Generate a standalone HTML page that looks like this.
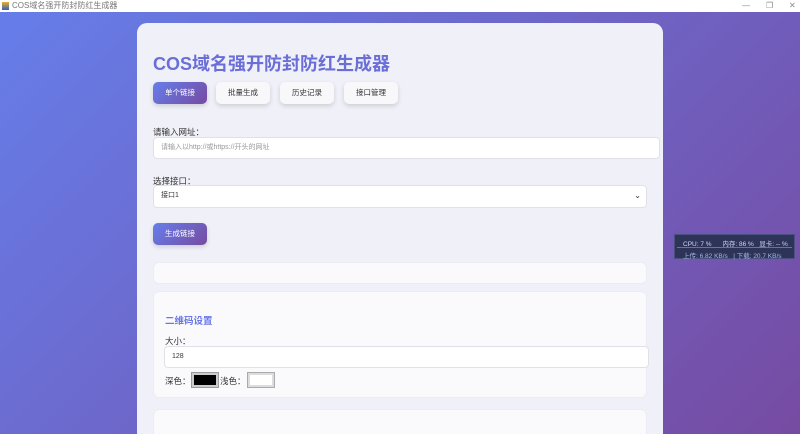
<!DOCTYPE html>
<html><head><meta charset="utf-8"><style>
*{box-sizing:border-box;margin:0;padding:0}
html{width:800px;height:434px;overflow:hidden}
body{width:800px;height:434px;overflow:hidden;font-family:"Liberation Sans","Noto Sans CJK SC",sans-serif;background:linear-gradient(135deg,#667eea 0%,#764ba2 100%);position:relative}
.tb{position:absolute;left:0;top:0;width:800px;height:12px;background:#fff;font-size:8px;color:#777;line-height:12px;padding-left:12px}
.tb i{position:absolute;left:2px;top:2px;width:7px;height:8px;background:linear-gradient(#e8b030,#3060c0)}
.tb span{position:absolute;top:0;font-size:8px;color:#888}
.card{position:absolute;left:137px;top:23px;width:526px;height:411px;background:#f0f0f9;border-radius:10px 10px 0 0;overflow:hidden}
.a{position:absolute}
h1{position:absolute;left:16px;top:27px;font-size:18px;font-weight:bold;color:#6a6fd8;white-space:nowrap}
.btn{position:absolute;top:59px;width:54px;height:22px;border-radius:5px;background:#f8f8fb;box-shadow:0 2px 5px rgba(0,0,0,.15);font-size:7.5px;color:#333;text-align:center;line-height:22px}
.pri{background:linear-gradient(135deg,#667eea,#764ba2);color:#fff}
.lbl{position:absolute;font-size:8.5px;color:#333}
.inp{position:absolute;background:#fff;border:1px solid #e0e0ea;border-radius:4px;font-size:7px;line-height:20px;padding-left:7px;color:#333}
.box{position:absolute;background:#fafafd;border-radius:6px;border:1px solid #ececf4}
.ov{position:absolute;left:674px;top:234px;width:121px;height:25px;background:#2e3458;border:1px solid #4a5080;font-size:6.5px;color:#cfd4ff}
</style></head><body>
<div class="tb"><i></i>COS域名强开防封防红生成器<span style="left:742px">—</span><span style="left:766px">❐</span><span style="left:789px">✕</span></div>
<div class="card">
<h1>COS域名强开防封防红生成器</h1>
<div class="btn pri" style="left:16px">单个链接</div>
<div class="btn" style="left:79px">批量生成</div>
<div class="btn" style="left:143px">历史记录</div>
<div class="btn" style="left:207px">接口管理</div>
<div class="lbl" style="left:16px;top:103px">请输入网址：</div>
<div class="inp" style="left:16px;top:114px;width:507px;height:22px;color:#999">请输入以http://或https://开头的网址</div>
<div class="lbl" style="left:16px;top:152px">选择接口：</div>
<div class="inp" style="left:16px;top:162px;width:494px;height:23px">接口1<span style="position:absolute;right:5px;top:0;font-size:8px">⌄</span></div>
<div class="btn pri" style="left:16px;top:200px">生成链接</div>
<div class="box" style="left:16px;top:239px;width:494px;height:22px"></div>
<div class="box" style="left:16px;top:268px;width:494px;height:107px"></div>
<div class="a" style="left:28px;top:290px;font-size:9.5px;font-weight:bold;color:#6a78e8">二维码设置</div>
<div class="lbl" style="left:28px;top:312px">大小：</div>
<div class="inp" style="left:27px;top:323px;width:485px;height:22px">128</div>
<div class="lbl" style="left:28px;top:352px">深色：</div>
<div class="a" style="left:55px;top:350px;width:26px;height:14px;border:2px solid #ccc;background:#000;outline:1px solid #999"></div>
<div class="lbl" style="left:83px;top:352px">浅色：</div>
<div class="a" style="left:111px;top:350px;width:26px;height:14px;border:2px solid #ddd;background:#fff;outline:1px solid #aaa"></div>
<div class="box" style="left:16px;top:386px;width:494px;height:40px"></div>
</div>
<div class="ov"><div style="position:absolute;left:8px;top:3px;white-space:nowrap">CPU: 7 %&nbsp;&nbsp;&nbsp;&nbsp;&nbsp;&nbsp;内存: 86 %&nbsp;&nbsp;&nbsp;显卡: -- %</div>
<div style="position:absolute;left:2px;top:12px;width:115px;border-top:1px solid #3a8aa0"></div>
<div style="position:absolute;left:8px;top:15px;white-space:nowrap;color:#9fb8e8">上传: 6.82 KB/s&nbsp;&nbsp;&nbsp;|&nbsp;下载: 20.7 KB/s</div></div>
</body></html>
